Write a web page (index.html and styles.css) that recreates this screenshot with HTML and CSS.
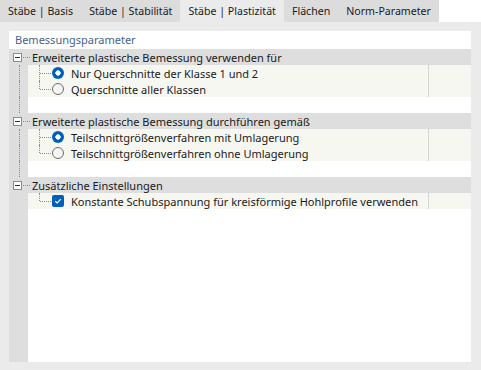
FILE: index.html
```html
<!DOCTYPE html>
<html>
    <head>
        <meta charset="utf-8">
        <title>Stäbe | Plastizität</title>

        <link rel="stylesheet" href="styles.css">
    </head>
    <body>
        <div class="tabs">
            <div class="tab">Stäbe | Basis</div>
            <div class="tab">Stäbe | Stabilität</div>
            <div class="tab active">Stäbe | Plastizität</div>
            <div class="tab">Flächen</div>
            <div class="tab">Norm-Parameter</div>
        </div>

        <div class="page">
            <div class="panel">
                <div class="panel-title">Bemessungsparameter</div>
                <div class="tree">
                    <div class="row head">
                        <span class="toggle"></span><span class="link"></span>
                        <span class="label">Erweiterte plastische Bemessung verwenden für</span>
                    </div>
                    <div class="row">
                        <span class="gutter line"></span>
                        <div class="cell">
                            <span class="branch"></span>
                            <span class="radio checked"></span>
                            <span class="label">Nur Querschnitte der Klasse 1 und 2</span>
                        </div>
                        <div class="val"></div>
                    </div>
                    <div class="row">
                        <span class="gutter line"></span>
                        <div class="cell">
                            <span class="branch last"></span>
                            <span class="radio"></span>
                            <span class="label">Querschnitte aller Klassen</span>
                        </div>
                        <div class="val"></div>
                    </div>
                    <div class="row gap"><span class="gutter line"></span></div>

                    <div class="row head">
                        <span class="toggle"></span><span class="link"></span>
                        <span class="label">Erweiterte plastische Bemessung durchführen gemäß</span>
                    </div>
                    <div class="row">
                        <span class="gutter line"></span>
                        <div class="cell">
                            <span class="branch"></span>
                            <span class="radio checked"></span>
                            <span class="label">Teilschnittgrößenverfahren mit Umlagerung</span>
                        </div>
                        <div class="val"></div>
                    </div>
                    <div class="row">
                        <span class="gutter line"></span>
                        <div class="cell">
                            <span class="branch last"></span>
                            <span class="radio"></span>
                            <span class="label">Teilschnittgrößenverfahren ohne Umlagerung</span>
                        </div>
                        <div class="val"></div>
                    </div>
                    <div class="row gap"><span class="gutter line"></span></div>

                    <div class="row head">
                        <span class="toggle"></span><span class="link"></span>
                        <span class="label">Zusätzliche Einstellungen</span>
                    </div>
                    <div class="row">
                        <span class="gutter"></span>
                        <div class="cell">
                            <span class="branch last"></span>
                            <span class="check">
                                <svg width="12" height="12" viewBox="0 0 12 12"><polyline points="3.2,6.2 5.2,8 8.8,4.2" fill="none" stroke="#fff" stroke-width="1.2"/></svg>
                            </span>
                            <span class="label">Konstante Schubspannung für kreisförmige Hohlprofile verwenden</span>
                        </div>
                        <div class="val"></div>
                    </div>
                </div>
            </div>
        </div>
    </body>
</html>
```

FILE: styles.css
```css
body {
    margin: 0;
    background-color: white;
    font-family: "Noto Sans", "Open Sans", sans-serif;
    font-size: 11px;
    color: #1a1a1a;
}

/* tab strip */
.tabs {
    display: flex;
    height: 22px;
}
.tab {
    padding: 0 8px;
    line-height: 22px;
    font-size: 10.6px;
    background-color: #dcdcdc;
    white-space: nowrap;
}
.tab.active {
    background-color: #ebebeb;
}

.page {
    height: 331px;
    padding: 9px 10px 8px 9px;
    background-color: #ebebeb;
}
.panel {
    display: flex;
    flex-direction: column;
    height: 100%;
    background-color: white;
}
.panel-title {
    height: 18px;
    line-height: 18px;
    padding-left: 6px;
    color: #45648a;
}

/* tree grid, the grey gutter runs all the way down */
.tree {
    flex: 1;
    background: linear-gradient(to right, #dedede 19px, white 19px);
}
.row {
    display: flex;
    align-items: center;
    height: 16px;
}
.row.head {
    padding-left: 4px;
    background-color: #dedede;
}
.toggle {
    position: relative;
    width: 7px;
    height: 7px;
    border: 1px solid #8c8c8c;
    background-color: white;
}
.toggle::after {
    content: "";
    position: absolute;
    left: 1px;
    top: 3px;
    width: 5px;
    height: 1px;
    background-color: #333;
}
.link {
    width: 7px;
    margin: 0 2px 0 1px;
    border-top: 1px dotted #8c8c8c;
}

.gutter {
    align-self: stretch;
    width: 19px;
    flex: none;
}
.gutter.line {
    width: 11px;
    border-right: 1px dotted #8c8c8c;
    box-sizing: border-box;
}
.gutter.line + .cell {
    margin-left: 8px;
}

.cell {
    flex: 1;
    align-self: stretch;
    display: flex;
    align-items: center;
    padding-left: 11px;
    background-color: #f7f7f2;
}
.val {
    align-self: stretch;
    width: 42px;
    border-left: 1px solid #d6d6d2;
    background-color: #f7f7f2;
}

.branch {
    position: relative;
    align-self: stretch;
    width: 12px;
}
.branch::before {
    content: "";
    position: absolute;
    left: 0;
    top: 0;
    bottom: 0;
    border-left: 1px dotted #8c8c8c;
}
.branch.last::before {
    bottom: 8px;
}
.branch::after {
    content: "";
    position: absolute;
    left: 1px;
    right: 0;
    top: 8px;
    border-top: 1px dotted #8c8c8c;
}

.radio {
    width: 10px;
    height: 10px;
    margin-left: 1px;
    border: 1px solid #6e6e6e;
    border-radius: 50%;
    background-color: #f4f4f4;
}
.radio.checked {
    width: 12px;
    height: 12px;
    border: none;
    background: radial-gradient(circle, white 0 2.4px, #005fb8 2.9px);
}
.check {
    display: flex;
    width: 12px;
    height: 12px;
    margin-left: 1px;
    border-radius: 2px;
    background-color: #005fb8;
}

.label {
    margin-left: 7px;
    white-space: nowrap;
}
.head .label {
    margin-left: 0;
}
```
